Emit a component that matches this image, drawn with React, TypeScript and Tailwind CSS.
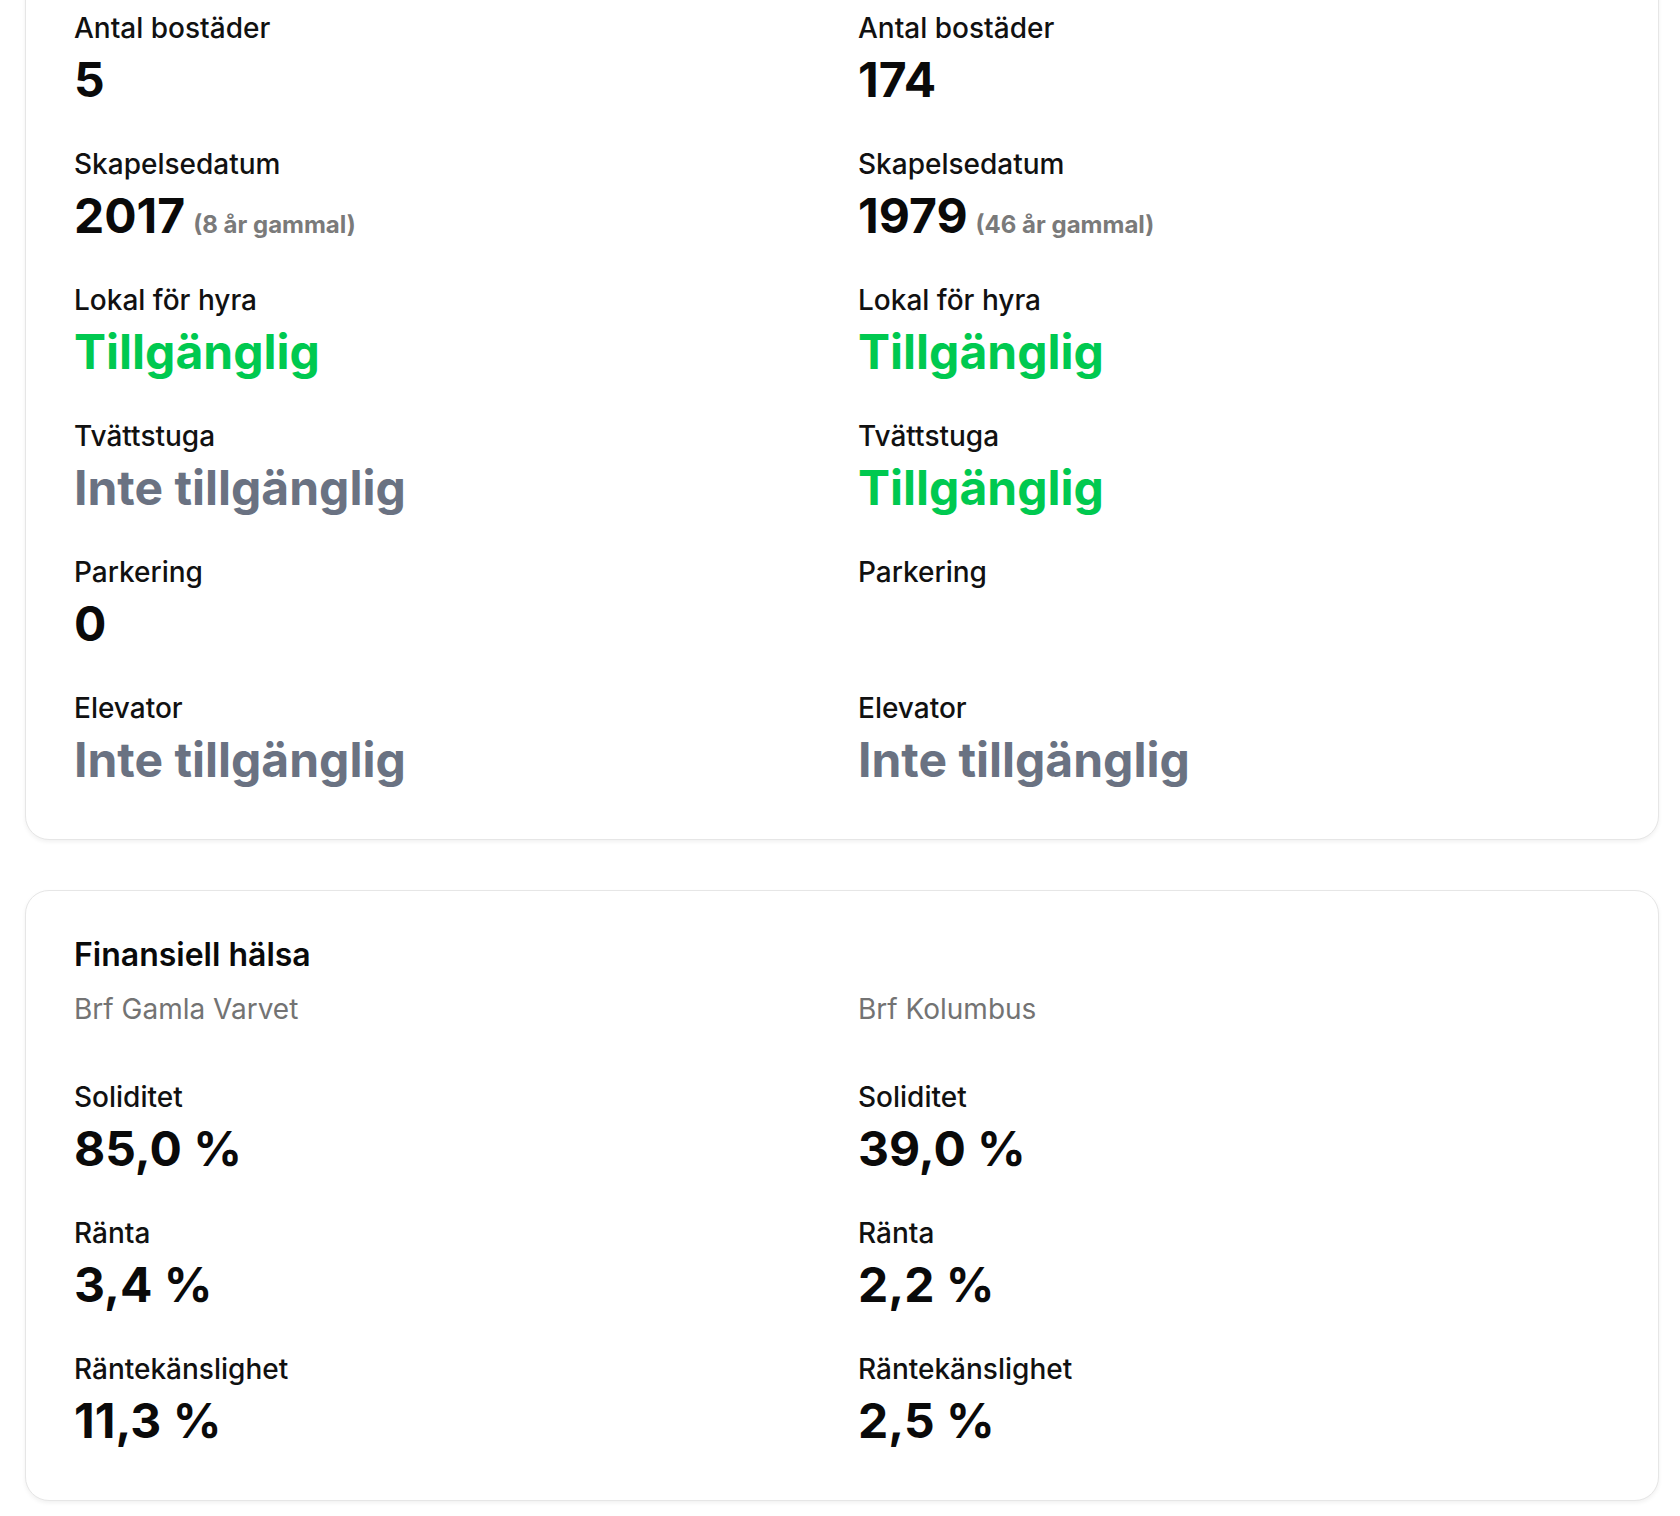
type Tone = "default" | "yes" | "no"

type Field = {
  label: string
  value: string
  tone?: Tone
  note?: string
}

const propertyA: Field[] = [
  { label: "Antal bostäder", value: "5" },
  { label: "Skapelsedatum", value: "2017", note: "(8 år gammal)" },
  { label: "Lokal för hyra", value: "Tillgänglig", tone: "yes" },
  { label: "Tvättstuga", value: "Inte tillgänglig", tone: "no" },
  { label: "Parkering", value: "0" },
  { label: "Elevator", value: "Inte tillgänglig", tone: "no" },
]

const propertyB: Field[] = [
  { label: "Antal bostäder", value: "174" },
  { label: "Skapelsedatum", value: "1979", note: "(46 år gammal)" },
  { label: "Lokal för hyra", value: "Tillgänglig", tone: "yes" },
  { label: "Tvättstuga", value: "Tillgänglig", tone: "yes" },
  { label: "Parkering", value: "" },
  { label: "Elevator", value: "Inte tillgänglig", tone: "no" },
]

const financeA: Field[] = [
  { label: "Soliditet", value: "85,0 %" },
  { label: "Ränta", value: "3,4 %" },
  { label: "Räntekänslighet", value: "11,3 %" },
]

const financeB: Field[] = [
  { label: "Soliditet", value: "39,0 %" },
  { label: "Ränta", value: "2,2 %" },
  { label: "Räntekänslighet", value: "2,5 %" },
]

const toneClass: Record<Tone, string> = {
  default: "text-[#0a0a0a]",
  yes: "text-[#00c950]",
  no: "text-[#6a7282]",
}

function Stat({ field }: { field: Field }) {
  const tone = field.tone ?? "default"
  return (
    <div className="flex flex-col">
      <p className="text-[28px] leading-[36px] font-medium text-[#111111]">{field.label}</p>
      <p className={`mt-2 h-[52px] text-[48px] leading-[52px] font-bold ${toneClass[tone]}`}>
        {field.value}
        {field.note && (
          <span className="ml-2 text-[24px] font-bold text-[#7a7a7a]">{field.note}</span>
        )}
      </p>
    </div>
  )
}

function Column({ fields }: { fields: Field[] }) {
  return (
    <div className="flex flex-col gap-y-[40px]">
      {fields.map((f) => (
        <Stat key={f.label} field={f} />
      ))}
    </div>
  )
}

function Card({ children, className = "" }: { children: React.ReactNode; className?: string }) {
  return (
    <section
      className={`ml-[25px] mr-[21px] rounded-3xl border border-[#e6e6e6] bg-white pl-[48px] pr-[50px] pb-[53px] shadow-[0_2px_4px_rgba(0,0,0,0.06)] ${className}`}
    >
      {children}
    </section>
  )
}

export default function App() {
  return (
    <main
      className="min-h-screen overflow-hidden bg-white pb-4"
      style={{ fontFamily: "Inter, 'Noto Sans', sans-serif" }}
    >
      <Card className="-mt-[40px] pt-[49px]">
        <div className="grid grid-cols-2 gap-x-[34px]">
          <Column fields={propertyA} />
          <Column fields={propertyB} />
        </div>
      </Card>

      <Card className="mt-[50px] pt-12">
        <h2 className="text-[32px] leading-[32px] font-semibold text-[#0a0a0a]">Finansiell hälsa</h2>
        <div className="mt-[20px] grid grid-cols-2 gap-x-[34px]">
          <p className="text-[28px] leading-[36px] text-[#737373]">Brf Gamla Varvet</p>
          <p className="text-[28px] leading-[36px] text-[#737373]">Brf Kolumbus</p>
        </div>
        <div className="mt-[52px] grid grid-cols-2 gap-x-[34px]">
          <Column fields={financeA} />
          <Column fields={financeB} />
        </div>
      </Card>
    </main>
  )
}
